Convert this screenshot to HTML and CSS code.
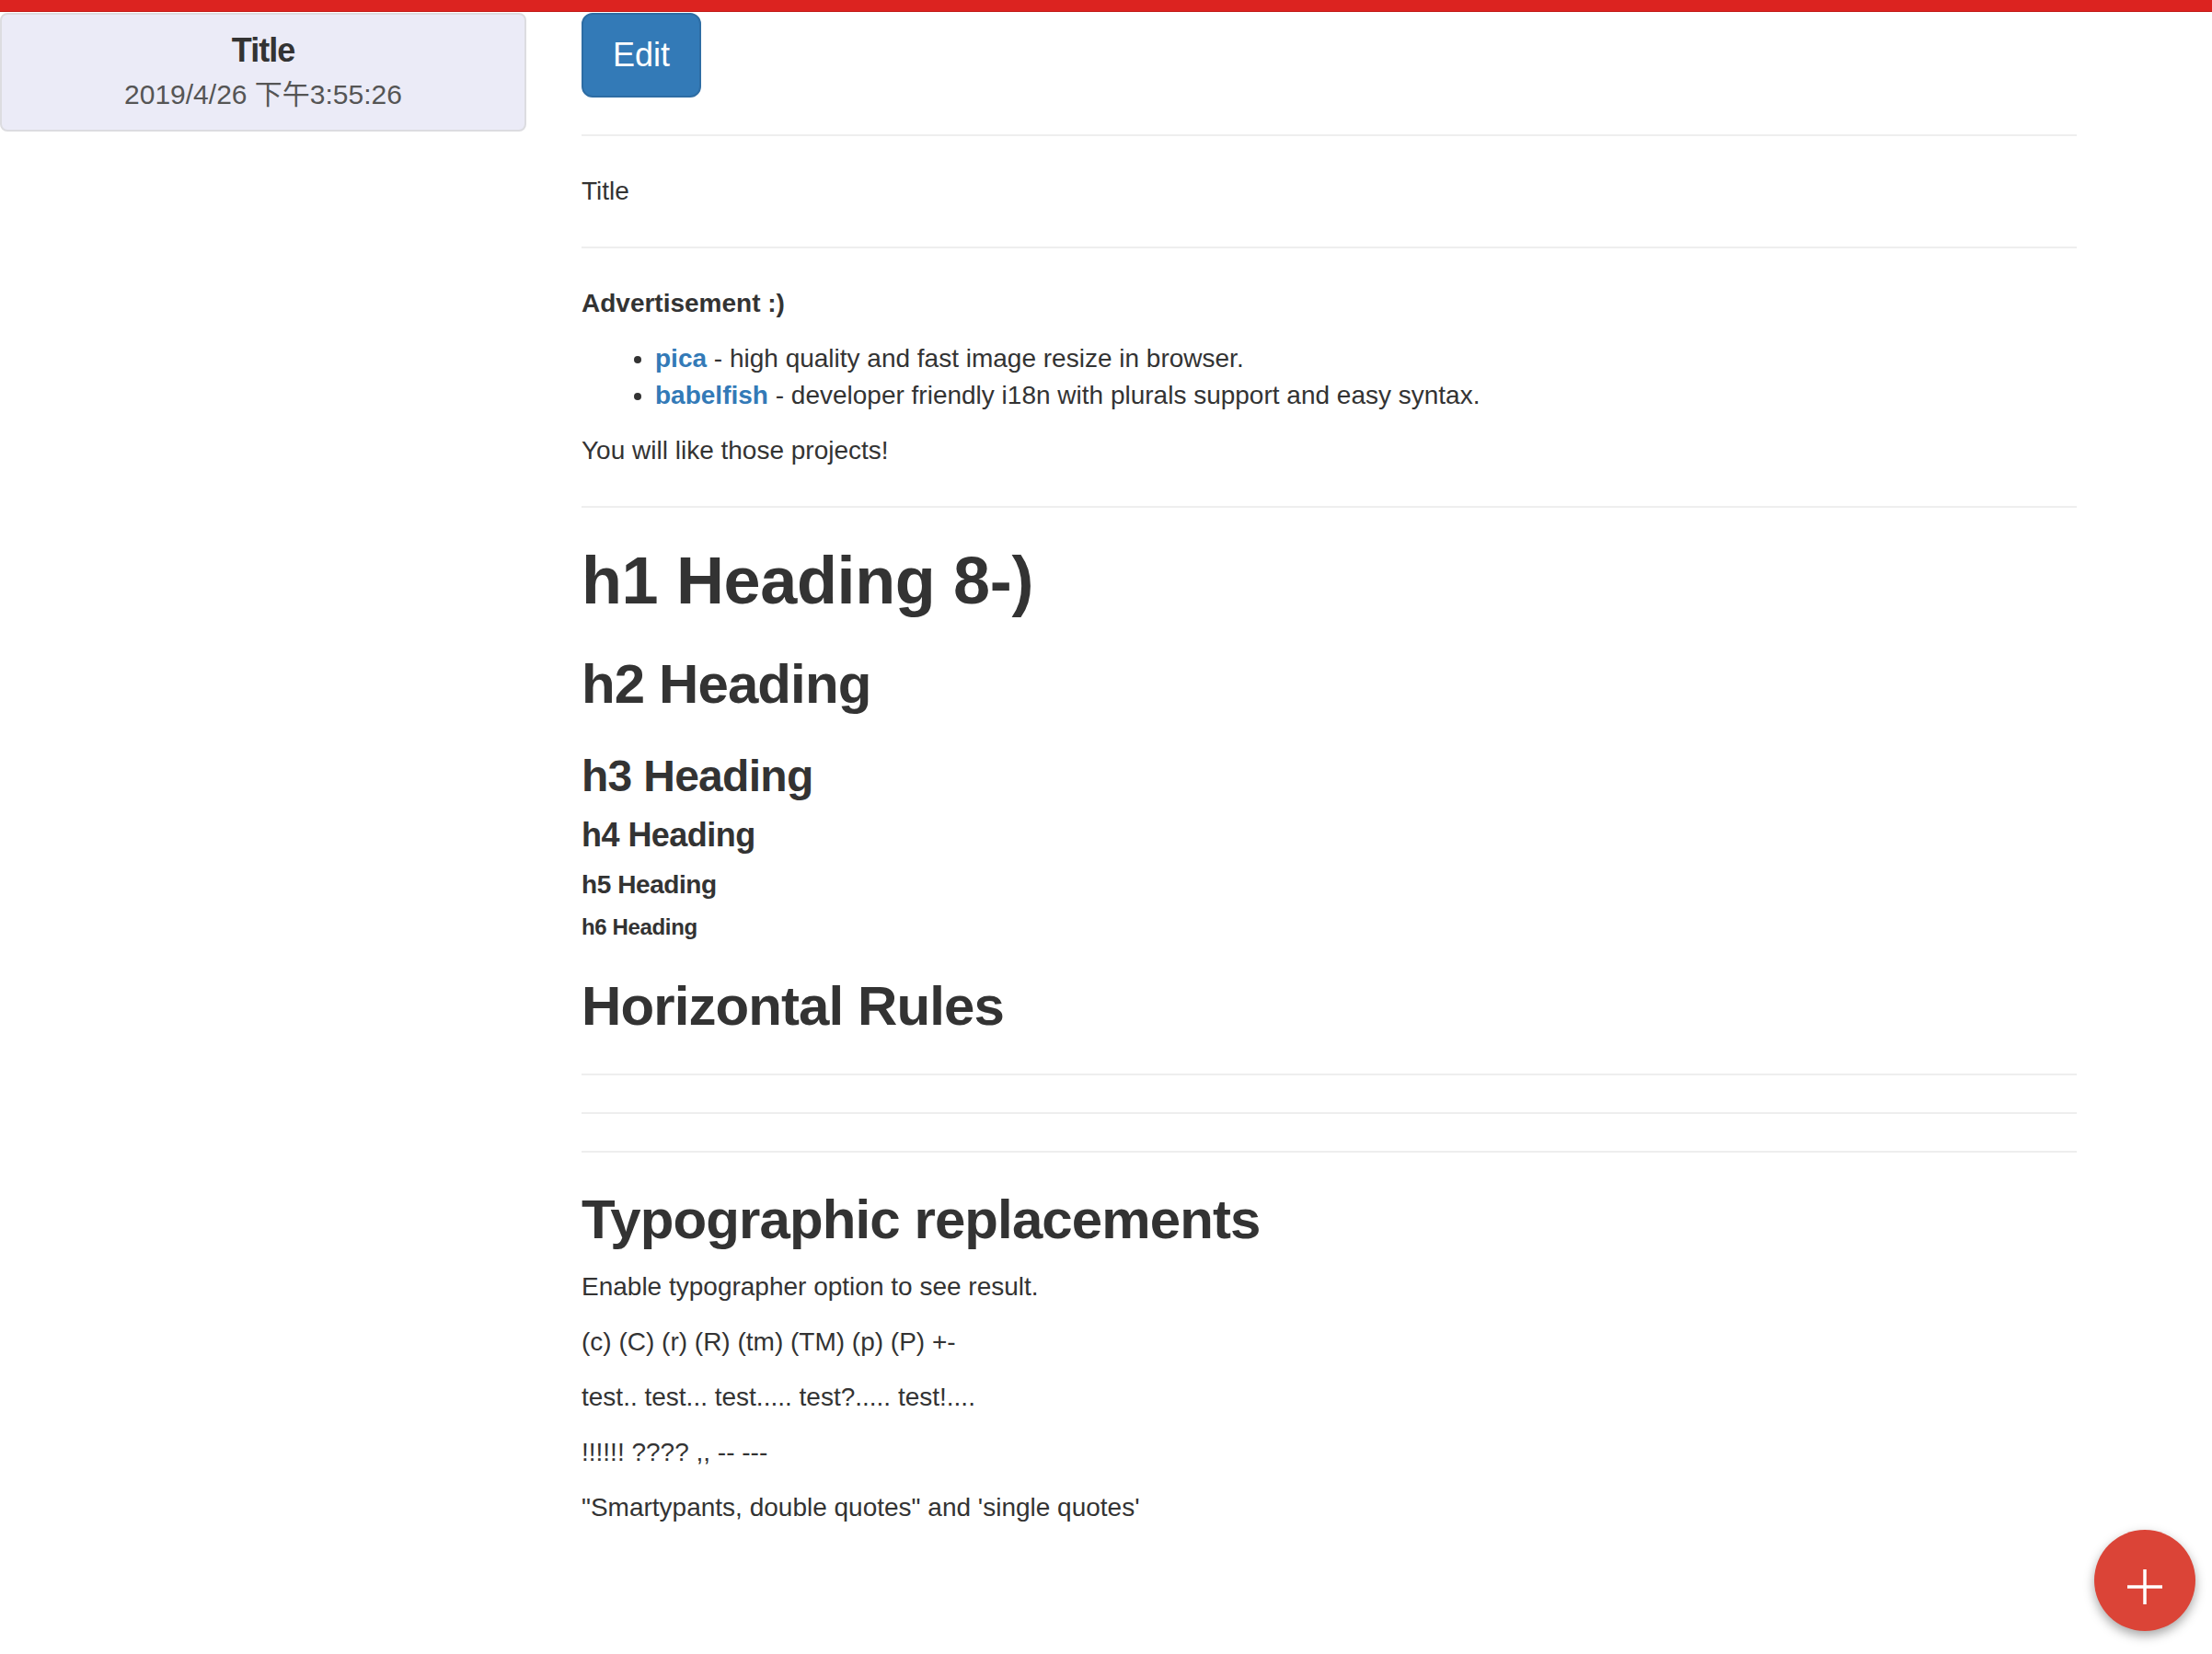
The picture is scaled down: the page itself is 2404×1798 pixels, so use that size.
FILE: index.html
```html
<!DOCTYPE html>
<html lang="en">
<head>
<meta charset="utf-8">
<title>Notes</title>
<link rel="stylesheet" href="styles.css">
</head>
<body>
<div class="topbar"></div>
<div class="layout">
  <aside class="sidebar">
    <div class="note-card">
      <h4 class="note-title">Title</h4>
      <p class="note-date">2019/4/26 下午3:55:26</p>
    </div>
  </aside>
  <main class="content">
    <button class="btn-edit" type="button">Edit</button>
    <hr>
    <p>Title</p>
    <hr>
    <p><strong>Advertisement :)</strong></p>
    <ul>
      <li><a href="#"><strong>pica</strong></a> - high quality and fast image resize in browser.</li>
      <li><a href="#"><strong>babelfish</strong></a> - developer friendly i18n with plurals support and easy syntax.</li>
    </ul>
    <p>You will like those projects!</p>
    <hr>
    <h1>h1 Heading 8-)</h1>
    <h2>h2 Heading</h2>
    <h3>h3 Heading</h3>
    <h4>h4 Heading</h4>
    <h5>h5 Heading</h5>
    <h6>h6 Heading</h6>
    <h2>Horizontal Rules</h2>
    <hr>
    <hr>
    <hr>
    <h2>Typographic replacements</h2>
    <p>Enable typographer option to see result.</p>
    <p>(c) (C) (r) (R) (tm) (TM) (p) (P) +-</p>
    <p>test.. test... test..... test?..... test!....</p>
    <p>!!!!!! ???? ,,  -- ---</p>
    <p>"Smartypants, double quotes" and 'single quotes'</p>
  </main>
</div>
<button class="fab" type="button" aria-label="Add">
  <svg width="40" height="40" viewBox="0 0 40 40"><path d="M20 1 V39 M1 20 H39" stroke="#fff" stroke-width="3.5" fill="none"/></svg>
</button>
</body>
</html>
```

FILE: styles.css
```css
html, body {
  margin: 0;
  padding: 0;
  background: #fff;
}
body {
  font-family: "Liberation Sans", Arial, "Noto Sans CJK SC", sans-serif;
  font-size: 28px;
  line-height: 40px;
  color: #333;
}
.topbar {
  height: 12px;
  background: #dc2320;
  border-bottom: 1px solid #c21b18;
}
.layout {
  display: flex;
  align-items: flex-start;
}
.sidebar {
  width: 572px;
  flex: 0 0 572px;
  padding-top: 1px;
}
.note-card {
  box-sizing: border-box;
  height: 129px;
  background: #ebebf7;
  border: 2px solid #dcdce0;
  border-radius: 8px;
  padding: 19px 30px 0;
  text-align: center;
}
.note-title {
  margin: 0 0 8px;
  font-size: 36px;
  line-height: 40px;
  font-weight: 700;
  letter-spacing: -1px;
  color: #333;
}
.note-date {
  margin: 0;
  font-size: 30px;
  line-height: 40px;
  color: #555;
}
.content {
  width: 1625px;
  margin-left: 60px;
  padding-top: 1px;
}
.btn-edit {
  display: block;
  box-sizing: border-box;
  width: 130px;
  height: 92px;
  padding: 0;
  font-family: inherit;
  font-size: 36px;
  line-height: 48px;
  color: #fff;
  background: #337ab7;
  border: 2px solid #2e6da4;
  border-radius: 12px;
}
hr {
  margin: 40px 0;
  border: 0;
  border-top: 2px solid #eee;
  height: 0;
}
p {
  margin: 0 0 20px;
}
ul {
  margin: 0 0 20px;
  padding-left: 80px;
}
a {
  color: #337ab7;
  text-decoration: none;
}
strong {
  font-weight: 700;
}
h1, h2, h3, h4, h5, h6 {
  font-weight: 700;
  color: #333;
  letter-spacing: -0.015em;
}
h1 {
  font-size: 72px;
  line-height: 79px;
  margin: 40px 0 20px;
  letter-spacing: -0.005em;
}
h2 {
  font-size: 60px;
  line-height: 66px;
  margin: 40px 0 20px;
}
h3 {
  font-size: 48px;
  line-height: 53px;
  margin: 40px 0 18px;
}
h4 {
  font-size: 36px;
  line-height: 40px;
  margin: 0 0 18px;
}
h5 {
  font-size: 28px;
  line-height: 31px;
  margin: 0 0 18px;
}
h6 {
  font-size: 24px;
  line-height: 26px;
  margin: 0 0 20px;
}
.fab {
  position: fixed;
  right: 18px;
  bottom: 25px;
  width: 110px;
  height: 110px;
  padding: 0;
  border: 0;
  border-radius: 50%;
  background: #db4437;
  box-shadow: 0 5px 12px rgba(0, 0, 0, 0.35);
  display: flex;
  align-items: center;
  justify-content: center;
}
.fab svg {
  display: block;
  margin-top: 14px;
}
```
